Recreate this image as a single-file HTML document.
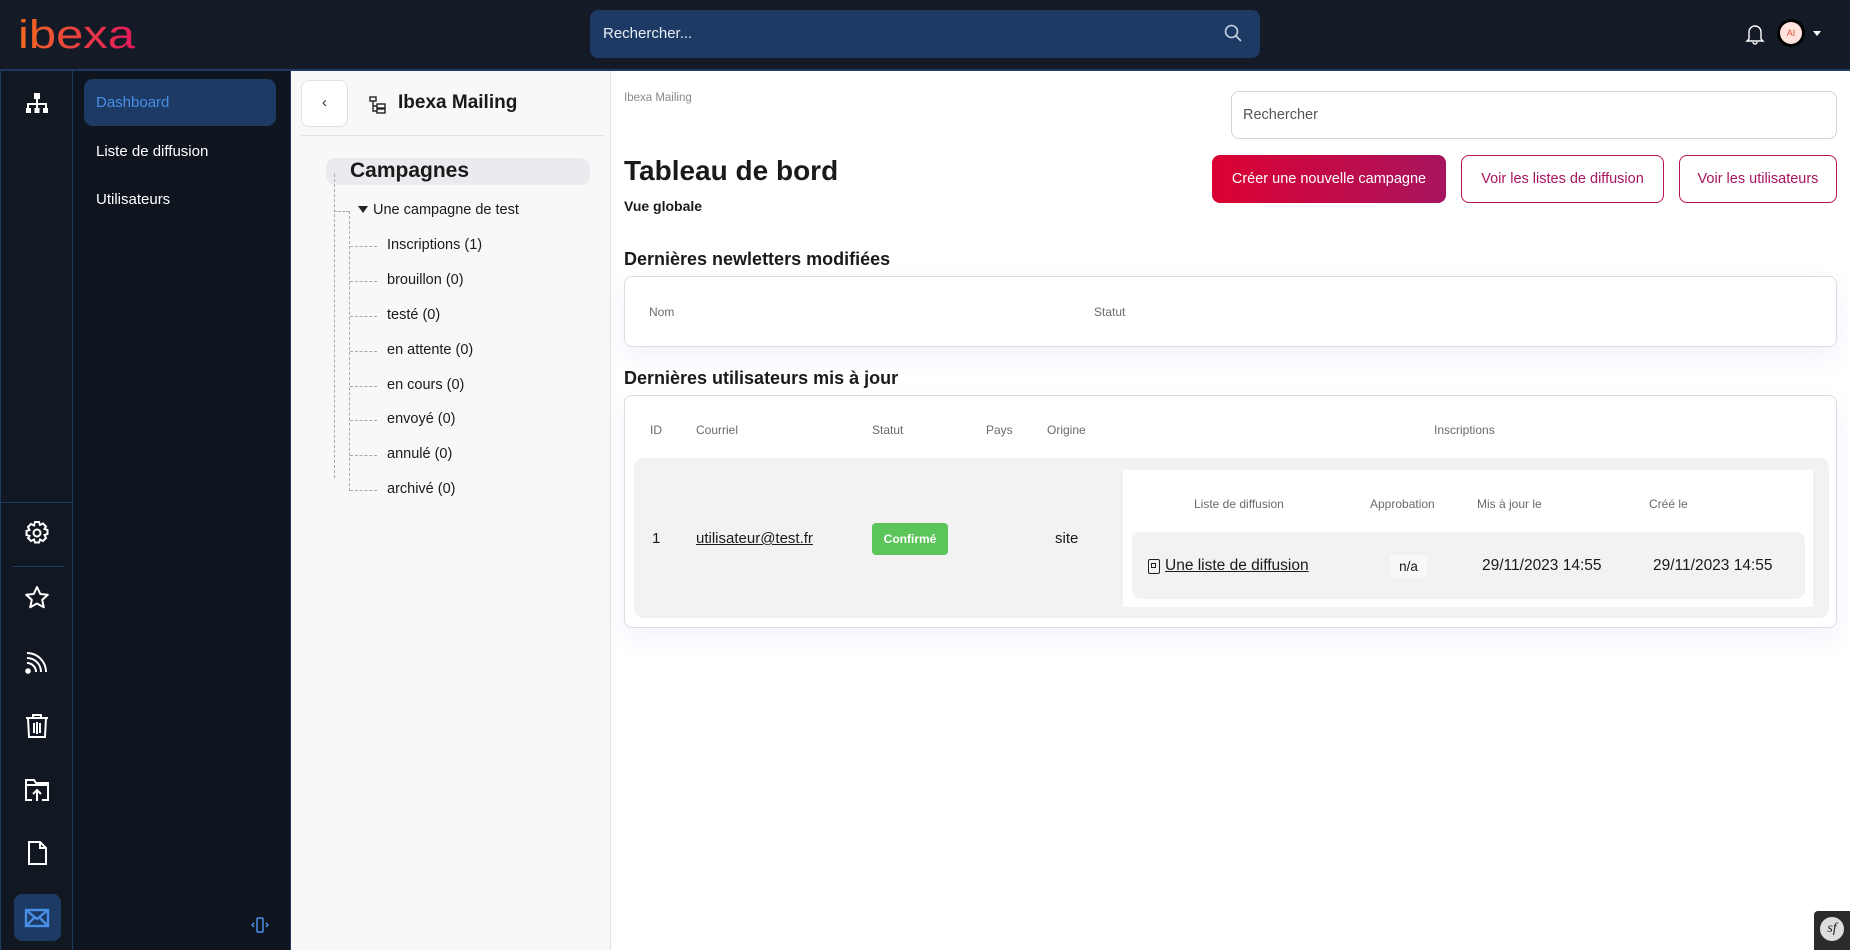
<!DOCTYPE html>
<html><head><meta charset="utf-8"><style>
*{box-sizing:border-box;margin:0;padding:0}
body{width:1850px;height:950px;overflow:hidden;font-family:"Liberation Sans",sans-serif;background:#fff;position:relative;color:#1a1a1a}
.abs{position:absolute}
#hdr{left:0;top:0;width:1850px;height:71px;background:#151b26;border-bottom:2px solid #1c3a63}
#rail{left:0;top:71px;width:73px;height:879px;background:#121821;border-right:1px solid #1c3a63;border-left:1px solid #1c3a63}
#nav{left:73px;top:71px;width:218px;height:879px;background:#0f151e;border-right:1px solid #1c3a63}
#tree{left:291px;top:71px;width:320px;height:879px;background:#f8f8f8;border-right:1px solid #e2e2e2}
.ic{position:absolute;left:22px;width:28px;height:28px}
.navi{position:absolute;left:23px;font-size:15px;color:#fff}
.ti{position:absolute;left:387px;font-size:14.5px;color:#1a1a1a}
.th{position:absolute;font-size:12px;color:#6b6b6b}
.btn{position:absolute;top:155px;height:48px;border-radius:8px;font-size:14.5px;display:flex;align-items:center;justify-content:center}
.ob{border:1px solid #b8125a;color:#a8155f;background:#fff}
.card{position:absolute;left:624px;width:1213px;background:#fff;border:1px solid #dcdce6;border-radius:8px;box-shadow:0 10px 25px rgba(80,100,200,.08)}
.h2{position:absolute;left:624px;font-size:18px;font-weight:bold;color:#1a1a1a}
.hs{position:absolute;left:350px;width:27px;border-top:1px dashed #aaa}
</style></head><body>
<div id="hdr" class="abs">
<svg class="abs" style="left:16px;top:12px" width="125" height="42"><defs><linearGradient id="lg" x1="0" x2="1"><stop offset="0" stop-color="#f26a21"/><stop offset="1" stop-color="#e3175d"/></linearGradient></defs><text x="2" y="36" font-family="Liberation Sans" font-size="40" fill="url(#lg)" textLength="117" lengthAdjust="spacingAndGlyphs">ibexa</text></svg>
<div class="abs" style="left:590px;top:10px;width:670px;height:48px;background:#1c3a63;border-radius:8px"></div>
<div class="abs" style="left:603px;top:25px;font-size:15px;color:#e8eef6">Rechercher...</div>
<svg class="abs" style="left:1224px;top:24px" width="18" height="18" fill="none" stroke="#c8d2e0" stroke-width="1.6"><circle cx="7.5" cy="7.5" r="6"/><path d="M12 12l5 5"/></svg>
<svg class="abs" style="left:1745px;top:23px" width="20" height="22" fill="none" stroke="#fff" stroke-width="1.4"><path d="M4 16V9a6 6 0 0112 0v7l2 2H2zM8 19a2 2 0 004 0"/></svg>
<div class="abs" style="left:1777px;top:19px;width:28px;height:28px;border-radius:50%;background:#000"></div>
<div class="abs" style="left:1780px;top:22px;width:22px;height:22px;border-radius:50%;background:#ffe3dc;color:#e84a3a;font-size:9px;text-align:center;line-height:22px">AI</div>
<div class="abs" style="left:1813px;top:31px;width:0;height:0;border-left:4px solid transparent;border-right:4px solid transparent;border-top:5px solid #fff"></div>
</div>
<div id="rail" class="abs">
<svg class="ic" style="top:19px" viewBox="0 0 28 28" fill="#fff"><rect x="11" y="3" width="6" height="6"/><rect x="13" y="9" width="2" height="6"/><rect x="4" y="13" width="20" height="2"/><rect x="4" y="13" width="2" height="5"/><rect x="22" y="13" width="2" height="5"/><rect x="13" y="13" width="2" height="5"/><rect x="3" y="18" width="5" height="5"/><rect x="11.5" y="18" width="5" height="5"/><rect x="20" y="18" width="5" height="5"/></svg>
<div class="abs" style="left:0;top:431px;width:72px;height:1px;background:#1c3a63"></div>
<svg class="ic" style="top:448px" viewBox="0 0 28 28" fill="none" stroke="#fff" stroke-width="2"><circle cx="14" cy="14" r="3.5"/><path d="M12 3h4l1 3 3-1.5 3 3L21.5 10l3 1v4l-3 1 1.5 3-3 3-3-1.5-1 3h-4l-1-3-3 1.5-3-3L6.5 17l-3-1v-4l3-1L5 8l3-3 3 1.5z"/></svg>
<div class="abs" style="left:11px;top:495px;width:52px;height:1px;background:#1c3a63"></div>
<svg class="ic" style="top:513px" viewBox="0 0 28 28" fill="none" stroke="#fff" stroke-width="2" stroke-linejoin="round"><path d="M14 3l3.3 7 7.5.8-5.6 5.1 1.6 7.4L14 19.5l-6.8 3.8 1.6-7.4L3.2 10.8l7.5-.8z"/></svg>
<svg class="ic" style="top:577px" viewBox="0 0 28 28" fill="none" stroke="#fff" stroke-width="2"><circle cx="5" cy="23" r="1.8" fill="#fff"/><path d="M4 15a9 9 0 019 9M4 10a14 14 0 0114 14M4 5a19 19 0 0119 19"/></svg>
<svg class="ic" style="top:641px" viewBox="0 0 28 28" fill="none" stroke="#fff" stroke-width="2"><path d="M3 6h22M10 6V3h8v3M5 6l1 19h16l1-19M11 11v10M14 10v12M17 11v10"/></svg>
<svg class="ic" style="top:705px" viewBox="0 0 28 28" fill="none" stroke="#fff" stroke-width="2"><path d="M9 24H3V4h8l2 3h12v17h-6M3 9h22M14 25V14M10 18l4-4 4 4"/></svg>
<svg class="ic" style="top:768px" viewBox="0 0 28 28" fill="none" stroke="#fff" stroke-width="2"><path d="M6 3h11l6 6v16H6zM17 3v6h6"/></svg>
<div class="abs" style="left:13px;top:823px;width:47px;height:47px;border-radius:8px;background:#1c3a63"></div>
<svg class="ic" style="top:833px" viewBox="0 0 28 28" fill="none" stroke="#4a8fe7" stroke-width="2.4"><rect x="3" y="6" width="22" height="16"/><path d="M3 6l11 9 11-9M3 22l8-8M25 22l-8-8"/></svg>
</div>
<div id="nav" class="abs">
<div class="abs" style="left:11px;top:8px;width:192px;height:47px;border-radius:9px;background:#1c3a63"></div>
<div class="navi" style="top:23px;color:#4a8fe7">Dashboard</div>
<div class="navi" style="top:72px">Liste de diffusion</div>
<div class="navi" style="top:120px">Utilisateurs</div>
<svg class="abs" style="left:178px;top:845px" width="18" height="18" fill="none" stroke="#4a8fe7" stroke-width="1.5"><rect x="6" y="2" width="6" height="14" rx="1"/><path d="M3 7l-2 2 2 2M15 7l2 2-2 2"/></svg>
</div>
<div id="tree" class="abs">
<div class="abs" style="left:10px;top:9px;width:47px;height:47px;border:1px solid #e0e0e0;border-radius:8px;background:#fff;text-align:center;line-height:44px;font-size:15px;color:#333">&#8249;</div>
<svg class="abs" style="left:78px;top:25px" width="18" height="18" fill="none" stroke="#222" stroke-width="1.4"><rect x="1" y="1" width="6" height="4"/><rect x="8" y="8" width="8" height="4"/><rect x="8" y="13" width="8" height="4"/><path d="M4 5v10h4M4 10h4"/></svg>
<div class="abs" style="left:107px;top:21px;font-size:19px;font-weight:bold;color:#1a1a1a">Ibexa Mailing</div>
<div class="abs" style="left:10px;top:64px;width:303px;height:1px;background:#e2e2e2"></div>
<div class="abs" style="left:35px;top:87px;width:264px;height:27px;border-radius:9px;background:#ebebef"></div>
<div class="abs" style="left:59px;top:88px;font-size:21px;font-weight:bold;color:#1a1a1a">Campagnes</div>
</div>
<div class="abs" style="left:334px;top:174px;height:304px;border-left:1px dashed #aaa"></div>
<div class="abs" style="left:334px;top:211px;width:15px;border-top:1px dashed #aaa"></div>
<div class="abs" style="left:349px;top:211px;height:280px;border-left:1px dashed #aaa"></div>
<div class="abs" style="left:358px;top:206px;width:0;height:0;border-left:5px solid transparent;border-right:5px solid transparent;border-top:7px solid #222"></div>
<div class="abs" style="left:373px;top:202px;font-size:14.5px">Une campagne de test</div>
<div class="ti" style="top:237px">Inscriptions (1)</div>
<div class="ti" style="top:272px">brouillon (0)</div>
<div class="ti" style="top:307px">testé (0)</div>
<div class="ti" style="top:342px">en attente (0)</div>
<div class="ti" style="top:377px">en cours (0)</div>
<div class="ti" style="top:411px">envoyé (0)</div>
<div class="ti" style="top:446px">annulé (0)</div>
<div class="ti" style="top:481px">archivé (0)</div>
<div class="hs" style="top:246px"></div>
<div class="hs" style="top:281px"></div>
<div class="hs" style="top:316px"></div>
<div class="hs" style="top:351px"></div>
<div class="hs" style="top:386px"></div>
<div class="hs" style="top:420px"></div>
<div class="hs" style="top:455px"></div>
<div class="hs" style="top:490px"></div>

<div class="abs" style="left:624px;top:92px;font-size:11.5px;color:#8a8a8a">Ibexa Mailing</div>
<div class="abs" style="left:1231px;top:91px;width:606px;height:48px;border:1px solid #d4d4d4;border-radius:8px"></div>
<div class="abs" style="left:1243px;top:107px;font-size:14.5px;color:#555">Rechercher</div>
<div class="abs" style="left:624px;top:155px;font-size:28px;font-weight:bold">Tableau de bord</div>
<div class="abs" style="left:624px;top:198px;font-size:14px;font-weight:bold">Vue globale</div>
<div class="btn" style="left:1212px;width:234px;background:linear-gradient(90deg,#dc0032,#a8155f);color:#fff">Créer une nouvelle campagne</div>
<div class="btn ob" style="left:1461px;width:203px">Voir les listes de diffusion</div>
<div class="btn ob" style="left:1679px;width:158px">Voir les utilisateurs</div>
<div class="h2" style="top:249px">Dernières newletters modifiées</div>
<div class="card" style="top:276px;height:71px"></div>
<div class="th" style="left:649px;top:305px">Nom</div>
<div class="th" style="left:1094px;top:305px">Statut</div>
<div class="h2" style="top:368px">Dernières utilisateurs mis à jour</div>
<div class="card" style="top:395px;height:233px"></div>
<div class="th" style="left:650px;top:423px">ID</div>
<div class="th" style="left:696px;top:423px">Courriel</div>
<div class="th" style="left:872px;top:423px">Statut</div>
<div class="th" style="left:986px;top:423px">Pays</div>
<div class="th" style="left:1047px;top:423px">Origine</div>
<div class="th" style="left:1434px;top:423px">Inscriptions</div>
<div class="abs" style="left:634px;top:458px;width:1195px;height:160px;background:#f2f2f4;border-radius:9px"></div>
<div class="abs" style="left:652px;top:530px;font-size:15px">1</div>
<div class="abs" style="left:696px;top:530px;font-size:15px;text-decoration:underline">utilisateur@test.fr</div>
<div class="abs" style="left:872px;top:523px;width:76px;height:32px;background:#5bc45a;border-radius:4px;color:#fff;font-size:12px;font-weight:bold;text-align:center;line-height:32px">Confirmé</div>
<div class="abs" style="left:1055px;top:530px;font-size:15px">site</div>
<div class="abs" style="left:1123px;top:470px;width:690px;height:137px;background:#fff"></div>
<div class="th" style="left:1194px;top:497px">Liste de diffusion</div>
<div class="th" style="left:1370px;top:497px">Approbation</div>
<div class="th" style="left:1477px;top:497px">Mis à jour le</div>
<div class="th" style="left:1649px;top:497px">Créé le</div>
<div class="abs" style="left:1132px;top:532px;width:673px;height:67px;background:#f2f2f4;border-radius:9px"></div>
<div class="abs" style="left:1148px;top:559px;width:12px;height:15px;border:1.5px solid #222;border-radius:2px"></div>
<div class="abs" style="left:1151px;top:563px;width:5px;height:5px;border:1px solid #222"></div>
<div class="abs" style="left:1165px;top:557px;font-size:15.5px;text-decoration:underline"> Une liste de diffusion</div>
<div class="abs" style="left:1390px;top:555px;width:37px;height:23px;background:#f8f8f8;border-radius:3px;font-size:13.5px;text-align:center;line-height:23px">n/a</div>
<div class="abs" style="left:1482px;top:557px;font-size:15.5px">29/11/2023 14:55</div>
<div class="abs" style="left:1653px;top:557px;font-size:15.5px">29/11/2023 14:55</div>
<div class="abs" style="left:1814px;top:911px;width:36px;height:39px;background:#2b2b2b;border-radius:4px 0 0 0"></div>
<div class="abs" style="left:1820px;top:917px;width:24px;height:24px;border-radius:50%;background:#ddd;color:#222;font-size:14px;font-style:italic;text-align:center;line-height:24px;font-family:'Liberation Serif',serif">sf</div>
</body></html>
